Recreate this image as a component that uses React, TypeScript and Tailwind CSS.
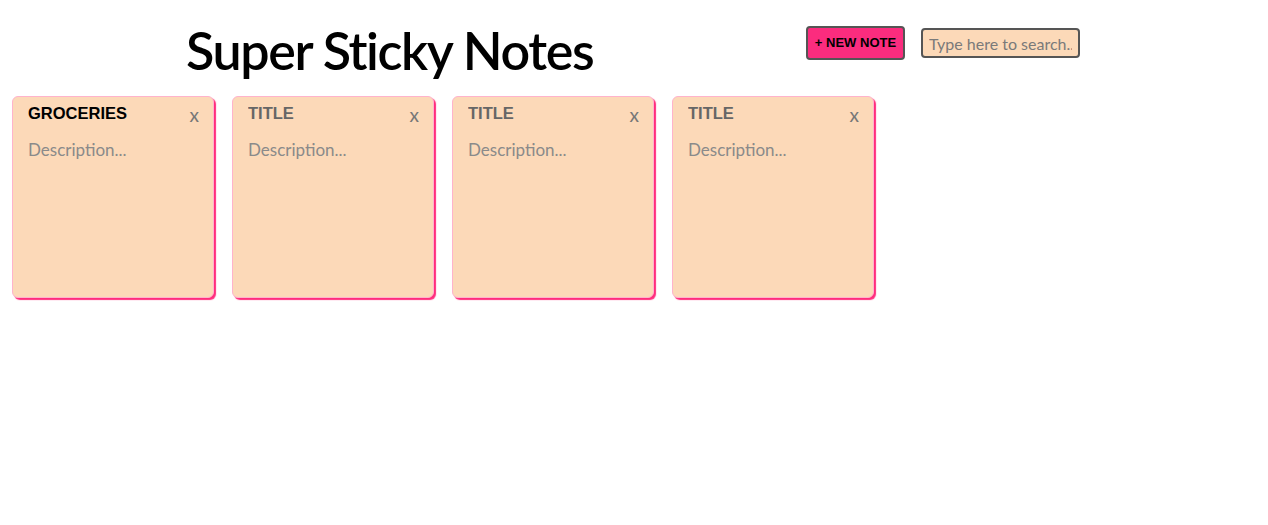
import React from "react";

const notes = [
  { title: "GROCERIES" },
  { title: "" },
  { title: "" },
  { title: "" },
];

function Note({ title }: { title: string }) {
  return (
    <div className="w-[202px] h-[202px] shrink-0 rounded-[6px] border border-[#ffb3cc] bg-[#fcd9b8] shadow-[2px_2px_1px_0_#ff2d7d] px-[15px] pt-[5px] flex flex-col">
      <div className="flex items-start justify-between">
        <input
          defaultValue={title}
          placeholder="TITLE"
          className="w-[140px] bg-transparent outline-none font-['Liberation_Sans',sans-serif] font-bold text-[16.5px] text-black placeholder:text-[#666] leading-[22px]"
        />
        <span className="font-['Lato',sans-serif] text-[19px] text-[#777] mt-[1px] mr-[-1px] leading-[24px]">x</span>
      </div>
      <textarea
        placeholder="Description..."
        className="mt-[12px] resize-none bg-transparent outline-none font-['Lato',sans-serif] text-[17px] text-[#444] placeholder:text-[#8a8a8a] h-[130px] leading-[22px]"
      />
    </div>
  );
}

export default function App() {
  return (
    <div className="min-h-[525px] bg-white font-['Lato',sans-serif]">
      <header className="flex items-start pl-[186px] pt-[18px]">
        <h1 className="font-['Lato',sans-serif] font-semibold text-[52px] leading-[64px] tracking-[-1.4px] text-black w-[620px]">
          Super Sticky Notes
        </h1>
        <button className="mt-[8px] w-[99px] h-[34px] rounded-[4px] border-2 border-[#555] bg-[#fb2c7e] font-['Liberation_Sans',sans-serif] font-bold text-[13px] text-black">
          + NEW NOTE
        </button>
        <input
          placeholder="Type here to search..."
          className="ml-[16px] mt-[10px] w-[159px] h-[30px] rounded-[4px] border-2 border-[#555] bg-[#fcd9b8] px-[6px] font-['Lato',sans-serif] text-[16px] text-[#444] placeholder:text-[#7a7a7a] outline-none"
        />
      </header>
      <main className="flex gap-[18px] pl-[12px] pt-[14px]">
        {notes.map((n, i) => (
          <Note key={i} title={n.title} />
        ))}
      </main>
    </div>
  );
}
